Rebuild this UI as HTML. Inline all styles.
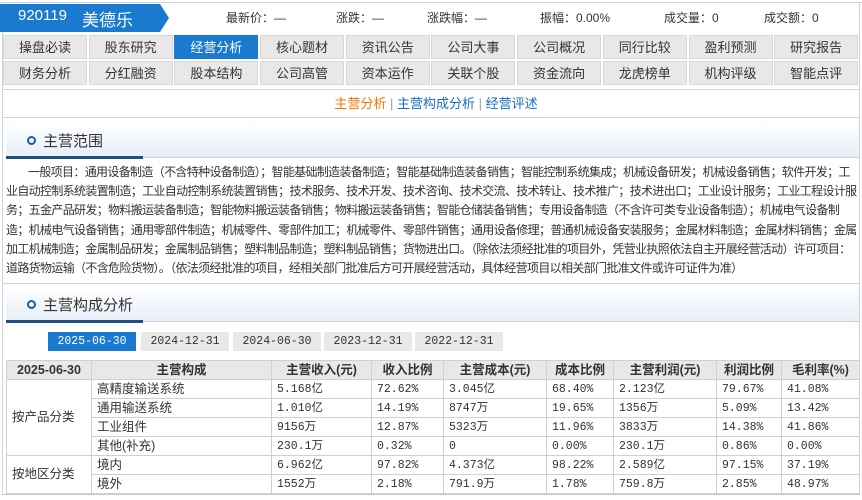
<!DOCTYPE html>
<html><head><meta charset="utf-8"><style>
*{margin:0;padding:0;box-sizing:border-box}
body{width:862px;height:500px;overflow:hidden;background:#fff;font-family:"Liberation Sans","Noto Sans CJK SC",sans-serif;font-size:12px;color:#333;position:relative}
.a{position:absolute}
.nav{position:absolute;left:3px;width:857px}
.nav div{float:left;width:84px;height:24px;margin-right:1.7px;background:#e8e8e8;border:1px solid #d8d8d8;text-align:center;line-height:23px;font-size:13px;color:#333}
.nav div.on{background:#1a7ad0;color:#fff;border-color:#1a7ad0}
.hd{position:absolute;left:6px;width:853px;height:35px;background:linear-gradient(#fff,#e6eef7);border-bottom:1px solid #c5d3e0}
.hd span{position:absolute;left:37px;top:7px;font-size:15px;color:#333}
.hd i{position:absolute;left:21px;top:13px;width:9px;height:9px;border:2px solid #1a5ea0;border-radius:50%}
.hd b{position:absolute;left:0;bottom:-2px;width:137px;height:3px;background:#1f4f7f}
.tab{position:absolute;top:332px;height:19px;width:88px;background:#e8e8e8;text-align:center;line-height:19px;font-family:"Liberation Mono","Noto Sans CJK SC",monospace;font-size:11.5px;color:#333}
table{position:absolute;left:6px;top:360px;border-collapse:collapse;font-size:12px;table-layout:fixed}
td{border:1px solid #d0d0d0;height:19px;line-height:17px;padding:0 0 0 5px;white-space:nowrap;overflow:hidden;font-family:"Liberation Mono","Noto Sans CJK SC",monospace;font-size:11.5px}
td.c{font-family:"Liberation Sans","Noto Sans CJK SC",sans-serif;font-size:12.5px}
tr.h td{background:#e8e8e8;text-align:center;font-weight:bold;font-family:"Liberation Sans","Noto Sans CJK SC",sans-serif;font-size:12.5px;padding:0}
p.t{position:absolute;left:6px;top:163px;width:853px;line-height:19.2px;font-size:12px;color:#333;text-indent:22px;letter-spacing:-0.66px}
</style></head><body>
<div class="a" style="left:0;top:2px;width:862px;height:1px;background:#c8d6e4"></div>
<div class="a" style="left:2px;top:3px;width:1px;height:492px;background:#c8d6e4"></div>
<div class="a" style="left:859px;top:3px;width:1px;height:492px;background:#c8d6e4"></div>
<div class="a" style="left:2px;top:494px;width:858px;height:1px;background:#b9cde0"></div>
<svg class="a" style="left:0;top:4px" width="170" height="28"><polygon points="0,0 160,0 169,14 160,28 0,28" fill="#1a7ad0"/></svg>
<div class="a" style="left:18px;top:7px;color:#fff;font-size:15px">920119</div>
<div class="a" style="left:82px;top:6px;color:#fff;font-size:17px">美德乐</div>
<div class="a" style="left:226px;top:9px;font-size:12px">最新价：—</div>
<div class="a" style="left:336px;top:9px;font-size:12px">涨跌：—</div>
<div class="a" style="left:427px;top:9px;font-size:12px">涨跌幅：—</div>
<div class="a" style="left:540px;top:9px;font-size:12px">振幅：0.00%</div>
<div class="a" style="left:664px;top:9px;font-size:12px">成交量：0</div>
<div class="a" style="left:764px;top:9px;font-size:12px">成交额：0</div>
<div class="nav" style="top:35px"><div>操盘必读</div><div>股东研究</div><div class="on">经营分析</div><div>核心题材</div><div>资讯公告</div><div>公司大事</div><div>公司概况</div><div>同行比较</div><div>盈利预测</div><div>研究报告</div></div>
<div class="nav" style="top:61px"><div>财务分析</div><div>分红融资</div><div>股本结构</div><div>公司高管</div><div>资本运作</div><div>关联个股</div><div>资金流向</div><div>龙虎榜单</div><div>机构评级</div><div>智能点评</div></div>
<div class="a" style="left:2px;top:89px;width:858px;height:29px;border:1px solid #c8d6e4;text-align:center;line-height:27px;font-size:13px;padding-left:10px"><span style="color:#f07800">主营分析</span> <span style="color:#999">|</span> <span style="color:#1a6cc0">主营构成分析</span> <span style="color:#999">|</span> <span style="color:#1a6cc0">经营评述</span></div>
<div class="hd" style="top:123px"><i></i><span>主营范围</span><b></b></div>
<p class="t">一般项目：通用设备制造（不含特种设备制造）；智能基础制造装备制造；智能基础制造装备销售；智能控制系统集成；机械设备研发；机械设备销售；软件开发；工业自动控制系统装置制造；工业自动控制系统装置销售；技术服务、技术开发、技术咨询、技术交流、技术转让、技术推广；技术进出口；工业设计服务；工业工程设计服务；五金产品研发；物料搬运装备制造；智能物料搬运装备销售；物料搬运装备销售；智能仓储装备销售；专用设备制造（不含许可类专业设备制造）；机械电气设备制造；机械电气设备销售；通用零部件制造；机械零件、零部件加工；机械零件、零部件销售；通用设备修理；普通机械设备安装服务；金属材料制造；金属材料销售；金属加工机械制造；金属制品研发；金属制品销售；塑料制品制造；塑料制品销售；货物进出口。（除依法须经批准的项目外，凭营业执照依法自主开展经营活动）许可项目：道路货物运输（不含危险货物）。（依法须经批准的项目，经相关部门批准后方可开展经营活动，具体经营项目以相关部门批准文件或许可证件为准）</p>
<div class="a" style="left:2px;top:283px;width:858px;height:1px;background:#c8d6e4"></div>
<div class="hd" style="top:287px"><i></i><span>主营构成分析</span><b></b></div>
<div class="tab" style="left:48px;background:#1a7ad0;color:#fff">2025-06-30</div>
<div class="tab" style="left:141px">2024-12-31</div>
<div class="tab" style="left:233px">2024-06-30</div>
<div class="tab" style="left:324px">2023-12-31</div>
<div class="tab" style="left:415px">2022-12-31</div>
<table style="width:853px">
<colgroup><col style="width:85px"><col style="width:180px"><col style="width:100px"><col style="width:72px"><col style="width:103px"><col style="width:67px"><col style="width:103px"><col style="width:65px"><col style="width:78px"></colgroup>
<tr class="h"><td>2025-06-30</td><td>主营构成</td><td>主营收入(元)</td><td>收入比例</td><td>主营成本(元)</td><td>成本比例</td><td>主营利润(元)</td><td>利润比例</td><td>毛利率(%)</td></tr>
<tr><td rowspan="4" class="c">按产品分类</td><td class="c">高精度输送系统</td><td>5.168亿</td><td>72.62%</td><td>3.045亿</td><td>68.40%</td><td>2.123亿</td><td>79.67%</td><td>41.08%</td></tr>
<tr><td class="c">通用输送系统</td><td>1.010亿</td><td>14.19%</td><td>8747万</td><td>19.65%</td><td>1356万</td><td>5.09%</td><td>13.42%</td></tr>
<tr><td class="c">工业组件</td><td>9156万</td><td>12.87%</td><td>5323万</td><td>11.96%</td><td>3833万</td><td>14.38%</td><td>41.86%</td></tr>
<tr><td class="c">其他(补充)</td><td>230.1万</td><td>0.32%</td><td>0</td><td>0.00%</td><td>230.1万</td><td>0.86%</td><td>0.00%</td></tr>
<tr><td rowspan="2" class="c">按地区分类</td><td class="c">境内</td><td>6.962亿</td><td>97.82%</td><td>4.373亿</td><td>98.22%</td><td>2.589亿</td><td>97.15%</td><td>37.19%</td></tr>
<tr><td class="c">境外</td><td>1552万</td><td>2.18%</td><td>791.9万</td><td>1.78%</td><td>759.8万</td><td>2.85%</td><td>48.97%</td></tr>
</table>
</body></html>
